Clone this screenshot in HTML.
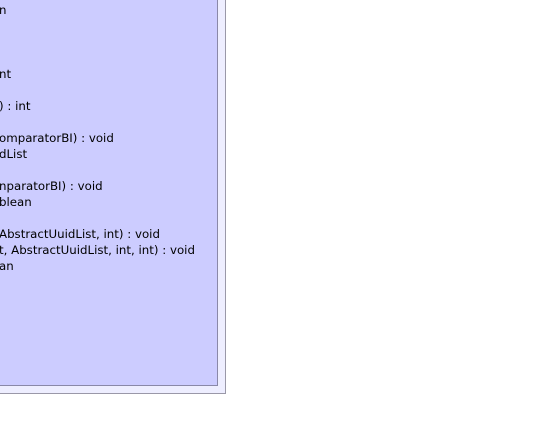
<!DOCTYPE html>
<html><head><style>
body{margin:0;width:552px;height:431px;background:#fff;position:relative;overflow:hidden;font-family:"DejaVu Sans","Liberation Sans",sans-serif;font-size:11.8px;color:#000}
.o{position:absolute;left:-2px;top:-2px;width:227px;height:395px;background:#eeeeff;border-right:1px solid #9a98a8;border-bottom:1px solid #9a98a8}
.i{position:absolute;left:-2px;top:-2px;width:219px;height:387px;background:#ccccff;border-right:1px solid #8a88a8;border-bottom:1px solid #8a88a8}
.t{position:absolute;left:-1px;white-space:pre;line-height:14px}
</style></head><body>
<div class="o"></div><div class="i"></div>
<div class="t" style="top:3px">n</div>
<div class="t" style="top:67px">nt</div>
<div class="t" style="top:99px">) : int</div>
<div class="t" style="top:131px">omparatorBI) : void</div>
<div class="t" style="top:147px">dList</div>
<div class="t" style="top:179px">nparatorBI) : void</div>
<div class="t" style="top:195px">blean</div>
<div class="t" style="top:227px">AbstractUuidList, int) : void</div>
<div class="t" style="top:243px">t, AbstractUuidList, int, int) : void</div>
<div class="t" style="top:259px">an</div>
</body></html>
